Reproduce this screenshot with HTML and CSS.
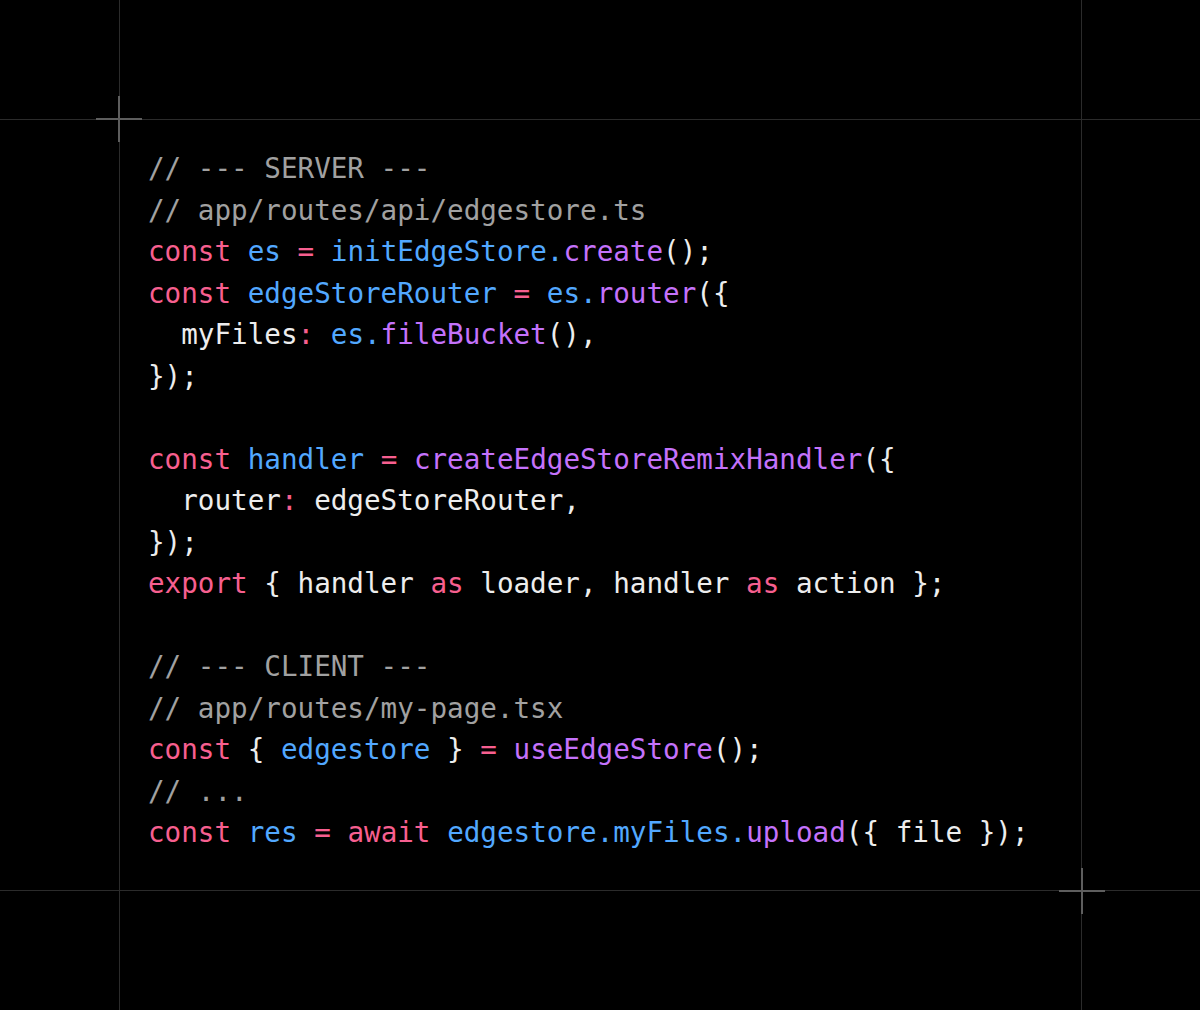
FILE: index.html
```html
<!DOCTYPE html>
<html lang="en">
<head>
<meta charset="utf-8">
<title>EdgeStore Remix</title>
<link rel="stylesheet" href="styles.css">
</head>
<body>
<div class="page">
  <div class="cell c1 r1"></div><div class="cell c2 r1"></div><div class="cell c3 r1"></div>
  <div class="cell c1 r2"></div>
  <div class="cell c2 r2 frame">
<pre class="code"><span class="cm">// --- SERVER ---</span>
<span class="cm">// app/routes/api/edgestore.ts</span>
<span class="kw">const</span> <span class="id">es</span> <span class="kw">=</span> <span class="id">initEdgeStore.</span><span class="fn">create</span>();
<span class="kw">const</span> <span class="id">edgeStoreRouter</span> <span class="kw">=</span> <span class="id">es.</span><span class="fn">router</span>({
  myFiles<span class="kw">:</span> <span class="id">es.</span><span class="fn">fileBucket</span>(),
});

<span class="kw">const</span> <span class="id">handler</span> <span class="kw">=</span> <span class="fn">createEdgeStoreRemixHandler</span>({
  router<span class="kw">:</span> edgeStoreRouter,
});
<span class="kw">export</span> { handler <span class="kw">as</span> loader, handler <span class="kw">as</span> action };

<span class="cm">// --- CLIENT ---</span>
<span class="cm">// app/routes/my-page.tsx</span>
<span class="kw">const</span> { <span class="id">edgestore</span> } <span class="kw">=</span> <span class="fn">useEdgeStore</span>();
<span class="cm">// ...</span>
<span class="kw">const</span> <span class="id">res</span> <span class="kw">=</span> <span class="kw">await</span> <span class="id">edgestore.myFiles.</span><span class="fn">upload</span>({ file });</pre>
    <span class="cross cross-tl"></span>
    <span class="cross cross-br"></span>
  </div>
  <div class="cell c3 r2"></div>
  <div class="cell c1 r3"></div><div class="cell c2 r3"></div><div class="cell c3 r3"></div>
</div>
</body>
</html>
```

FILE: styles.css
```css
html, body {
  margin: 0;
  padding: 0;
  background: #000;
}

.page {
  width: 1200px;
  height: 1010px;
  display: grid;
  grid-template-columns: 120px 962px 118px;
  grid-template-rows: 120px 771px 119px;
  overflow: hidden;
}

.cell {
  box-sizing: border-box;
}

.c1 { border-right: 1px solid #2b2b2b; }
.c2 { border-right: 1px solid #2b2b2b; }
.r1 { border-bottom: 1px solid #2b2b2b; }
.r2 { border-bottom: 1px solid #2b2b2b; }

.frame {
  position: relative;
  padding: 28px 0 0 28px;
}

.code {
  margin: 0;
  font-family: "DejaVu Sans Mono", "Liberation Mono", monospace;
  font-size: 27.6px;
  line-height: 41.5px;
  color: #ededed;
  white-space: pre;
}

.cm { color: #a1a1a1; }
.kw { color: #f75f8f; }
.id { color: #52a8ff; }
.fn { color: #c472fb; }

.cross {
  position: absolute;
  width: 46px;
  height: 46px;
  pointer-events: none;
}

.cross::before,
.cross::after {
  content: "";
  position: absolute;
  background: #5e5e5e;
}

.cross::before {
  left: 0;
  top: 22px;
  width: 46px;
  height: 2px;
}

.cross::after {
  left: 22px;
  top: 0;
  width: 2px;
  height: 46px;
}

.cross-tl {
  left: -24px;
  top: -24px;
}

.cross-br {
  right: -24px;
  bottom: -24px;
}
```
